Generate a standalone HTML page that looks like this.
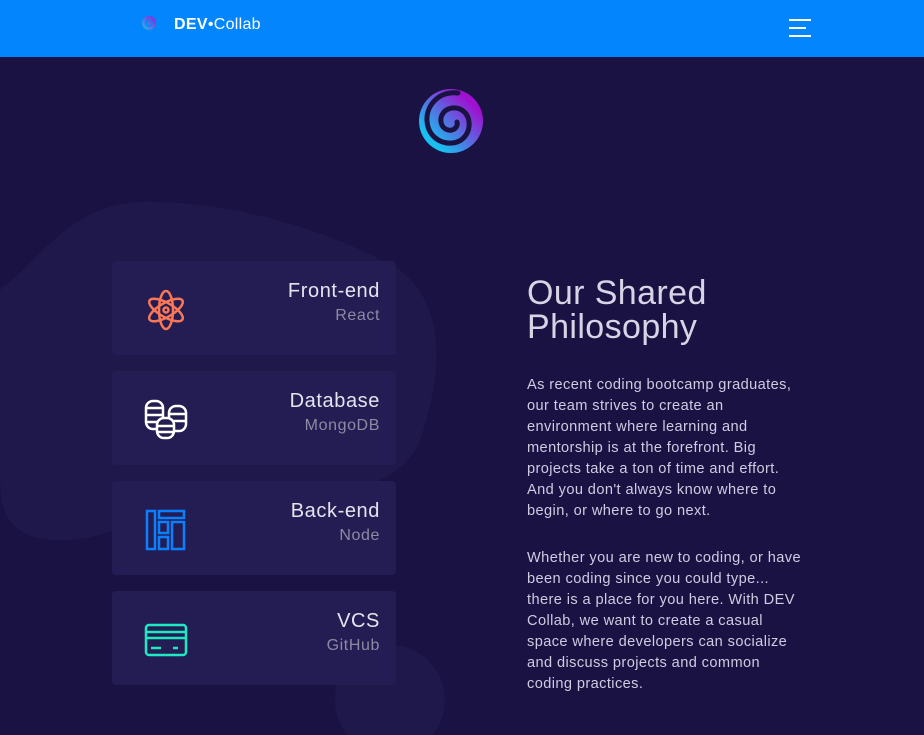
<!DOCTYPE html>
<html><head><meta charset="utf-8"><style>
*{margin:0;padding:0;box-sizing:border-box}
body{width:924px;height:735px;overflow:hidden;background:#1b1244;font-family:"Liberation Sans",sans-serif;position:relative}
.hdr{position:absolute;left:0;top:0;width:924px;height:57px;background:#0285fd}
.brand{position:absolute;left:174px;top:16px;color:#fff;font-size:16px;letter-spacing:0.3px}
.brand b{font-weight:700}
.hb{position:absolute;left:789px;height:2px;background:#fff}
.card{position:absolute;left:112px;width:284px;height:94px;background:#241d53;border-radius:4px}
.card .t{position:absolute;right:16px;top:19px;color:#e6e3f0;font-size:20px;letter-spacing:0.6px}
.card .s{position:absolute;right:16px;top:46px;color:#8e8aa2;font-size:16px;letter-spacing:0.6px}
.card svg{position:absolute;left:32px;top:27px}
h1{position:absolute;left:527px;top:276px;color:#d8d4e6;font-weight:400;font-size:34px;line-height:34px;letter-spacing:0.4px}
.p{position:absolute;left:527px;white-space:nowrap;color:#cfcbe0;font-size:14.6px;line-height:21px;letter-spacing:0.4px}
</style></head><body>
<svg style="position:absolute;left:0;top:0" width="924" height="735">
<path d="M0 290 C40 260 70 205 140 202 C230 200 330 230 400 270 C450 310 440 380 420 440 C400 490 330 500 240 500 C170 500 110 545 50 540 C0 535 0 500 0 470Z" fill="#1f184b"/>
<circle cx="390" cy="700" r="55" fill="#1f184b"/>
</svg>
<div class="hdr">
<svg style="position:absolute;left:141px;top:15px" width="18" height="18" viewBox="0 0 18 18"><defs><linearGradient id="g1" x1="0" y1="1" x2="1" y2="0"><stop offset="0" stop-color="#17c4f0"/><stop offset="1" stop-color="#a312d6"/></linearGradient></defs><circle cx="8" cy="8" r="7" fill="url(#g1)"/><circle cx="8" cy="8" r="3" fill="none" stroke="#0285fd" stroke-width="1.5"/></svg>
<div class="brand"><b>DEV</b>•Collab</div>
<div class="hb" style="top:19px;width:22px"></div>
<div class="hb" style="top:27px;width:17px"></div>
<div class="hb" style="top:35px;width:22px"></div>
</div>
<svg style="position:absolute;left:418px;top:88px" width="66" height="66" viewBox="0 0 66 66"><defs><linearGradient id="g2" x1="0" y1="1" x2="1" y2="0"><stop offset="0.2" stop-color="#17c0f0"/><stop offset="0.8" stop-color="#a010d0"/></linearGradient></defs>
<circle cx="33" cy="33" r="32" fill="url(#g2)"/>
<path d="M40 5 C20 3 8 18 9 33 C10 48 22 56 34 55 C46 54 52 44 51 34 C50 24 42 19 34 20 C26 21 22 28 23 34 C24 40 29 43 34 42 C38 41 40 37 39 34" fill="none" stroke="#1b1244" stroke-width="5" stroke-linecap="round"/></svg>

<div class="card" style="top:261px"><svg width="44" height="44" viewBox="0 0 44 44" fill="none" stroke="#fc7756" stroke-width="2.5"><ellipse cx="22" cy="22" rx="19" ry="7" transform="rotate(30 22 22)"/><ellipse cx="22" cy="22" rx="19" ry="7" transform="rotate(-30 22 22)"/><ellipse cx="22" cy="22" rx="19" ry="7" transform="rotate(90 22 22)"/><circle cx="22" cy="22" r="2.5"/></svg><div class="t">Front-end</div><div class="s">React</div></div>
<div class="card" style="top:371px"><svg width="44" height="44" viewBox="0 0 44 44" fill="none" stroke="#fff" stroke-width="2.5"><rect x="2" y="3" width="17" height="28" rx="7"/><path d="M2 10h17M2 17h17M2 24h17"/><rect x="25" y="8" width="17" height="25" rx="7"/><path d="M25 16h17M25 23h17"/><rect x="13" y="20" width="17" height="20" rx="7" fill="#241d53"/><path d="M13 28h17M13 34h17"/></svg><div class="t">Database</div><div class="s">MongoDB</div></div>
<div class="card" style="top:481px"><svg width="44" height="44" viewBox="0 0 44 44" fill="none" stroke="#0a80ff" stroke-width="2.5"><rect x="3" y="3" width="8" height="38"/><rect x="15" y="3" width="25" height="7"/><rect x="15" y="14" width="9" height="11"/><rect x="15" y="29" width="9" height="12"/><rect x="28" y="14" width="12" height="27"/></svg><div class="t">Back-end</div><div class="s">Node</div></div>
<div class="card" style="top:591px"><svg width="44" height="44" viewBox="0 0 44 44" fill="none" stroke="#1de9c2" stroke-width="2.5"><rect x="2" y="7" width="40" height="30" rx="3"/><path d="M2 14h40M2 20h40M7 30h10M29 30h5"/></svg><div class="t">VCS</div><div class="s">GitHub</div></div>

<h1>Our Shared<br>Philosophy</h1>
<div class="p" style="top:375px">As recent coding bootcamp graduates,<br>our team strives to create an<br>environment where learning and<br>mentorship is at the forefront. Big<br>projects take a ton of time and effort.<br>And you don't always know where to<br>begin, or where to go next.</div>
<div class="p" style="top:548px">Whether you are new to coding, or have<br>been coding since you could type...<br>there is a place for you here. With DEV<br>Collab, we want to create a casual<br>space where developers can socialize<br>and discuss projects and common<br>coding practices.</div>
</body></html>
